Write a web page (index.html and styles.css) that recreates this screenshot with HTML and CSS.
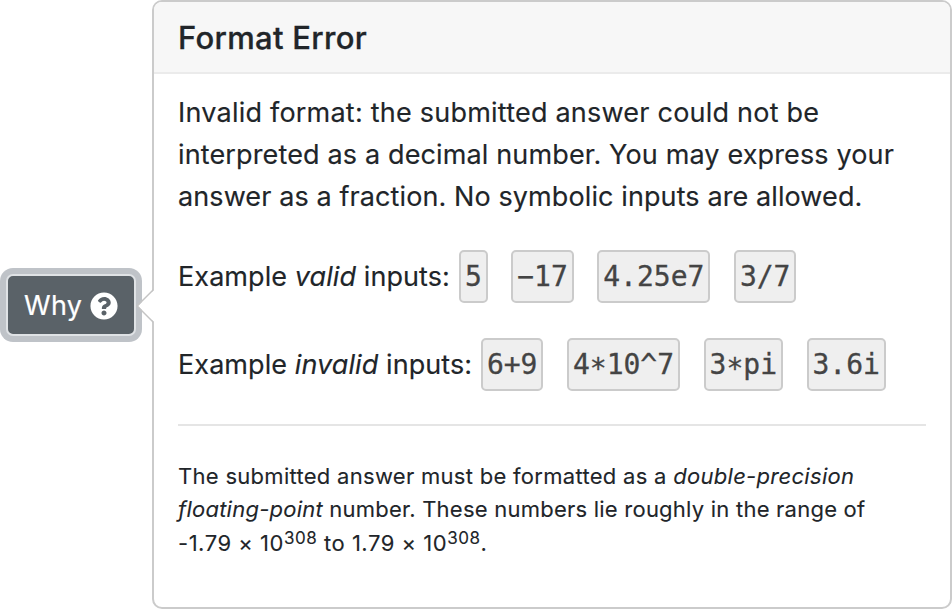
FILE: index.html
```html
<!DOCTYPE html>
<html lang="en">
<head>
<meta charset="utf-8">
<title>Format Error</title>
<link rel="stylesheet" href="styles.css">
</head>
<body>
<main class="page">
  <button class="why" type="button"><span class="why-label">Why</span>
    <svg class="icon" viewBox="0 0 512 512" aria-hidden="true"><path fill="currentColor" d="M504 256c0 136.997-111.043 248-248 248S8 392.997 8 256C8 119.083 119.043 8 256 8s248 111.083 248 248zM262.655 90c-54.497 0-89.255 22.957-116.549 63.758-3.536 5.286-2.353 12.415 2.715 16.258l34.699 26.31c5.205 3.947 12.621 3.008 16.665-2.122 17.864-22.658 30.113-35.797 57.303-35.797 20.429 0 45.698 13.148 45.698 32.958 0 14.976-12.363 22.667-32.534 33.976C247.128 238.528 216 254.941 216 296v4c0 6.627 5.373 12 12 12h56c6.627 0 12-5.373 12-12v-1.333c0-28.462 83.186-29.647 83.186-106.667 0-58.002-60.165-102-116.531-102zM256 338c-25.365 0-46 20.635-46 46 0 25.364 20.635 46 46 46s46-20.636 46-46c0-25.364-20.635-46-46-46z"/></svg>
  </button>
  <section class="popover">
    <svg class="arrow" viewBox="0 0 18 34" aria-hidden="true"><path d="M18 0V1L2 17L18 33V34Z" fill="#fff"/><path d="M17.3 .7L1 17L17.3 33.3" fill="none" stroke="#c4c4c4" stroke-width="1.5"/></svg>
    <h3 class="header"><span>Format Error</span></h3>
    <div class="body">
      <p class="message">
        <span class="line l1">Invalid format: the submitted answer could not be</span>
        <span class="line l2">interpreted as a decimal number. You may express your</span>
        <span class="line l3">answer as a fraction. No symbolic inputs are allowed.</span>
      </p>
      <div class="examples">
        <span class="label valid">Example <em>valid</em> inputs:</span>
        <code>5</code><code>−17</code><code>4.25e7</code><code>3/7</code>
      </div>
      <div class="examples">
        <span class="label invalid">Example <em>invalid</em> inputs:</span>
        <code>6+9</code><code>4<span class="star">*</span>10^7</code><code>3<span class="star">*</span>pi</code><code>3.6i</code>
      </div>
      <hr>
      <p class="note">
        <span class="line n1">The submitted answer must be formatted as a <em>double-precision</em></span>
        <span class="line n2"><em>floating-point</em> number. These numbers lie roughly in the range of</span>
        <span class="line n3">-1.79 × 10<sup>308</sup> to 1.79 × 10<sup>308</sup>.</span>
      </p>
    </div>
  </section>
</main>
</body>
</html>
```
FILE: styles.css
```css
* { box-sizing: border-box; }
body { margin: 0; background: #fff; color: #212529; font-family: Inter, "Liberation Sans", sans-serif; }
.page { display: flex; align-items: center; gap: 16px; width: 952px; height: 610px; padding-left: 6px; }
.why {
  display: flex; align-items: center; gap: 9px;
  width: 130px; height: 62px; padding: 2px 0 0 16px;
  border: 2px solid #dfe2e5; border-radius: 7px;
  background: #5a6268; color: #fff; box-shadow: 0 0 0 6px #bfc3c8;
  font: 400 27px/42px Inter, "Liberation Sans", sans-serif;
  letter-spacing: .3px;
}
.why-label { width: 57px; text-align: left; white-space: nowrap; -webkit-text-stroke: .2px currentColor; }
.icon { flex: none; width: 28px; height: 28px; }
.popover {
  position: relative; align-self: flex-start; width: 800px; height: 609px;
  border: 2px solid #cbcbcb; border-radius: 10px; background: #fff;
}
.arrow { position: absolute; left: -18px; top: 287px; width: 18px; height: 34px; }
.header {
  height: 72px; margin: 0; padding: 15px 24px 0; border-bottom: 2px solid #ebebeb;
  border-radius: 8px 8px 0 0; background: #f7f7f7; font-size: 31px; font-weight: 500; line-height: 42px;
  letter-spacing: .3px; -webkit-text-stroke: .3px currentColor;
}
.body { padding: 18px 24px 0; }
.line { display: block; width: max-content; white-space: nowrap; }
.message { margin: 0 0 32px; font-size: 27px; line-height: 42px; -webkit-text-stroke: .15px currentColor; }
.l1 { letter-spacing: .22px; }
.l2 { letter-spacing: .14px; }
.l3 { letter-spacing: .1px; }
.examples { display: flex; align-items: center; height: 53px; margin-bottom: 35px; font-size: 27px; letter-spacing: .08px; -webkit-text-stroke: .15px currentColor; }
.label { flex: none; white-space: nowrap; }
.valid { width: 281px; }
.invalid { width: 303px; }
code {
  height: 53px; margin-right: 23.7px; padding: 0 3.9px; border: 2px solid #cbcbcb; border-radius: 5px;
  background: #efefef; color: #444; font: 28px/50px "DejaVu Sans Mono", monospace; letter-spacing: 0;
  -webkit-text-stroke: .3px currentColor;
}
.star { position: relative; top: 4px; }
hr { height: 2px; margin: -2px 0 34px; border: 0; background: #e5e5e5; }
.note { margin: 0; font-size: 22px; line-height: 33.4px; -webkit-text-stroke: .1px currentColor; }
.n1 { letter-spacing: .29px; }
.n2 { letter-spacing: .23px; }
.n3 { letter-spacing: .52px; }
sup { position: relative; top: -.4em; font-size: 17px; line-height: 0; vertical-align: baseline; }
```
